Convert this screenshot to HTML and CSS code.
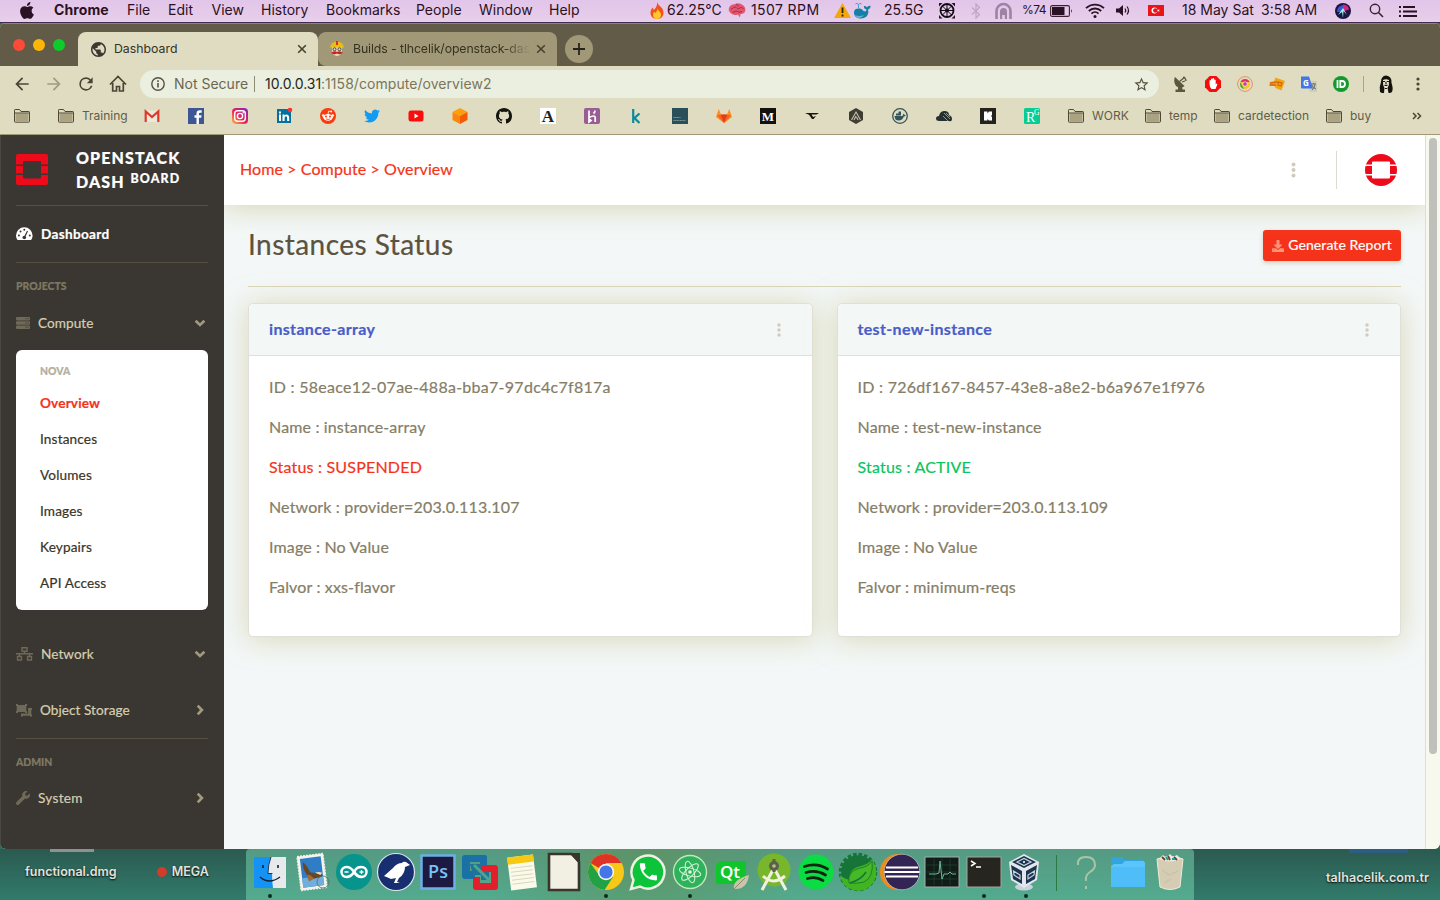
FILE: index.html
```html
<!DOCTYPE html>
<html lang="en">
<head>
<meta charset="utf-8">
<title>Dashboard</title>
<link rel="stylesheet" href="styles.css">
</head>
<body>
<svg class="defs" width="0" height="0">
  <symbol id="folder" viewBox="0 0 16 14"><path d="M.5 12.5V1.200q0-.7.7-.7h4.300l1.500 2h7.800q.7 0 .7.7v9.300q0 .7-.7.7H1.200q-.7 0-.7-.7z" fill="#dfdcc1" stroke="#4d4836"/><path d="M1.500 4.500h13v8h-13z" fill="#aaa281"/><path d="M1 4h14" stroke="#4d4836"/></symbol>
  <symbol id="dots" viewBox="0 0 4 16"><circle cx="2" cy="2.400" r="2"/><circle cx="2" cy="8" r="2"/><circle cx="2" cy="13.600" r="2"/></symbol>
  <symbol id="close" viewBox="0 0 10 10"><path d="M1.200 1.200l7.600 7.600M8.800 1.200L1.200 8.800" stroke="#46422f" stroke-width="1.600"/></symbol>
  <symbol id="down" viewBox="0 0 12 8"><path d="M1.600 1.700L6 5.900l4.400-4.200" fill="none" stroke="#a19a7c" stroke-width="2.700"/></symbol>
  <symbol id="right" viewBox="0 0 8 12"><path d="M1.700 1.600L5.900 6 1.700 10.400" fill="none" stroke="#a19a7c" stroke-width="2.700"/></symbol>
</svg>

<header class="menubar">
  <svg width="14" height="17" viewBox="2 0 20 24"><path d="M12.152 6.896c-.948 0-2.415-1.078-3.960-1.040-2.040.027-3.910 1.183-4.961 3.014-2.117 3.675-.546 9.103 1.519 12.090 1.013 1.454 2.208 3.090 3.792 3.039 1.520-.065 2.090-.987 3.935-.987 1.831 0 2.350.987 3.960.948 1.637-.026 2.676-1.480 3.676-2.948 1.156-1.688 1.636-3.325 1.662-3.415-.039-.013-3.182-1.221-3.220-4.857-.026-3.040 2.480-4.494 2.597-4.559-1.429-2.090-3.623-2.324-4.390-2.376-2-.156-3.675 1.090-4.610 1.090zM15.530 3.830c.843-1.012 1.400-2.427 1.245-3.830-1.207.052-2.662.805-3.532 1.818-.78.896-1.454 2.338-1.273 3.714 1.338.104 2.715-.688 3.559-1.701"/></svg>
  <b>Chrome</b><span>File</span><span>Edit</span><span>View</span><span>History</span><span>Bookmarks</span><span>People</span><span>Window</span><span>Help</span>
  <svg width="14" height="17" viewBox="0 0 14 17"><path d="M7 0c1 4 6.500 5 6.500 10.500C13.500 15 10.500 17 7 17S.5 15 .5 10.800C.5 8.500 1.500 7 2.500 5.500L4 8c1.500-2 3.500-4 3-8z" fill="#f4511e"/><path d="M7.500 6c0 3 3.500 3.500 3.500 7 0 2.500-2 4-4 4s-4-1.500-4-4c0-1.500.6-2.500 1.200-3.200L5.500 11C6.500 9.500 7.700 8 7.500 6z" fill="#ffca28"/></svg>
  <span class="stat">62.25°C</span>
  <svg width="18" height="15" viewBox="0 0 18 15"><path d="M1 8C0 4 3 1 6.500 1.200 9-.5 13 .3 14.500 2 17 3 18.500 7 16.500 9.500c-1 1.500-3 1.500-4 1.500l-.5 3.500-2-3C7 13 3 11.500 1 8z" fill="#e2566e"/><path d="M3 6c2 0 2-2 4-2s2 3 4 1.500S14 4 15.500 6M4.500 9c2 1 3-2 5-.5s3 0 4.500 0M8 1.500q2 0 2.500 2" fill="none" stroke="#a92a45"/></svg>
  <span class="stat rpm">1507 RPM</span>
  <svg width="17" height="15" viewBox="0 0 17 15"><path d="M8.500 0L17 15H0z" fill="#f5a70a"/><path d="M8.500 4.500v5.500M8.500 11.500v2" stroke="#332400" stroke-width="1.800"/></svg>
  <svg width="18" height="17" viewBox="0 0 18 17"><path d="M1 10c0-4 7-4.500 9-1.500 1.500 1.500 3.500 1 3.500-1-2-.5-3-2-2.500-3.500 1.500 0 2.500.5 3 1.500.5-1 2-2 3.500-1.500.3 2-1 3-2.500 3.500 1.500 5-2 9-7 9S1 14 1 10z" fill="#157fa8"/><path d="M2 13q4 2 9 0-2 3.500-5 3-3 0-4-3z" fill="#5cb4cd"/><path d="M5.500 6V2.500Q4 .5 2.500 2M5.500 2.500Q7 .5 8.500 2" fill="none" stroke="#36a8c9"/></svg>
  <span class="stat">25.5G</span>
  <svg width="16" height="17" viewBox="0 0 16 17"><circle cx="8" cy="8.500" r="6.500" fill="none" stroke="#120d12" stroke-width="1.800"/><circle cx="8" cy="8.500" r="2" fill="#120d12"/><path d="M8 2v13M1.500 8.500h13M3.400 4l9.200 9M12.600 4l-9.200 9" stroke="#120d12"/><path d="M0 1h3.500L0 4.500zM16 1v3.500L12.500 1zM0 16.500V13l3.500 3.500zM16 16.500h-3.500L16 13z"/></svg>
  <svg width="10" height="16" viewBox="0 0 10 16"><path d="M1 4.500l7.500 7L5 15V1l3.500 3.500-7.500 7" fill="none" stroke="#c0a5c4" stroke-width="1.200"/></svg>
  <svg width="17" height="16" viewBox="0 0 17 16"><path d="M1.500 16V8a7 7 0 0 1 14 0v8" fill="none" stroke="#9f83a4" stroke-width="2.600"/><path d="M5 16V8.500a3.500 3.500 0 0 1 7 0V16H9.800v-4H7.200v4z" fill="#9f83a4"/></svg>
  <span class="pct">%74</span>
  <svg width="23" height="12" viewBox="0 0 23 12"><rect x=".6" y=".6" width="18.800" height="10.800" rx="1.500" fill="none" stroke="#3c2032" stroke-width="1.100"/><path d="M2 2h12.500v8H2z" fill="#2c1024"/><path d="M21 4q1.800 2 0 4z" fill="#2c1024"/></svg>
  <svg width="20" height="15" viewBox="0 0 20 15"><path d="M1 5.200a13 13 0 0 1 18 0M3.800 8a9 9 0 0 1 12.400 0M6.500 10.600a5 5 0 0 1 7 0" fill="none" stroke="#2c1024" stroke-width="1.800"/><circle cx="10" cy="13.400" r="1.500" fill="#2c1024"/></svg>
  <svg width="14" height="13" viewBox="0 0 14 13"><path d="M0 4.500h3L7 1v11L3 8.500H0z" fill="#2c1024"/><path d="M9 4.500q1.500 2 0 4M11 2.500q3 4 0 8" fill="none" stroke="#2c1024" stroke-width="1.200"/></svg>
  <svg width="16" height="11" viewBox="0 0 16 11"><path d="M0 0h16v11H0z" fill="#ed1418"/><circle cx="6.500" cy="5.500" r="3" fill="#fff"/><circle cx="7.400" cy="5.500" r="2.300" fill="#ed1418"/><path d="M9 5.500l2.500-1.200-.5 1.200.5 1.200z" fill="#fff"/></svg>
  <span>18 May Sat</span><span>3:58 AM</span>
  <svg width="16" height="16" viewBox="0 0 16 16"><circle cx="8" cy="8" r="8" fill="#1b1445"/><path d="M8 1.500c4 0 6 3 6 5L8 8.500z" fill="#d4287d"/><path d="M2 9c0-4 2-6 6-7v7z" fill="#3e56c8"/><path d="M3 12l5-7 4 7-3.500-4-.5 7-1-6z" fill="#9ef0f0"/></svg>
  <svg width="15" height="15" viewBox="0 0 15 15"><circle cx="6" cy="6" r="4.700" fill="none" stroke="#3c2032" stroke-width="1.400"/><path d="M9.500 9.500L14 14" stroke="#3c2032" stroke-width="1.600"/></svg>
  <svg width="18" height="12" viewBox="0 0 18 12"><path d="M4 2h12M4 6.500h14M4 11h14M0 2h2M0 6.500h2M0 11h2" stroke="#2c1024" stroke-width="1.800"/></svg>
</header>

<main class="window">
  <div class="tabstrip">
    <div class="lights"><i class="r"></i><i class="y"></i><i class="g"></i></div>
    <div class="tab active">
      <svg width="15" height="15" viewBox="2 2 20 20"><path fill="#3b3830" d="M12 2C6.480 2 2 6.480 2 12s4.480 10 10 10 10-4.480 10-10S17.520 2 12 2zm-1 17.930c-3.950-.49-7-3.850-7-7.930 0-.62.08-1.210.21-1.790L9 15v1c0 1.100.9 2 2 2v1.930zm6.900-2.540c-.26-.81-1-1.390-1.900-1.390h-1v-3c0-.55-.45-1-1-1H8v-2h2c.55 0 1-.45 1-1V7h2c1.100 0 2-.9 2-2v-.41c2.930 1.190 5 4.060 5 7.410 0 2.080-.8 3.970-2.100 5.390z"/></svg>
      <span class="ttl">Dashboard</span><svg width="10" height="10"><use href="#close"/></svg>
    </div>
    <div class="tab idle">
      <svg width="14" height="16" viewBox="0 0 14 16"><path d="M2 6h10v5q-2 4-5 4t-5-4z" fill="#efd6b5"/><path d="M0 6.500Q1 1 7 .5q6 .5 7 6z" fill="#e8bd16"/><path d="M6 0h2v4H6z" fill="#d4341c"/><path d="M1 12q3-3 6-1 3-2 6 1-3 2-6 .5-3 1.500-6-.5z" fill="#cb2121"/><circle cx="4.500" cy="8.300" r="1.500" fill="none" stroke="#444"/><circle cx="9.500" cy="8.300" r="1.500" fill="none" stroke="#444"/></svg>
      <span class="ttl fade">Builds - tlhcelik/openstack-das</span><svg width="10" height="10"><use href="#close"/></svg>
    </div>
    <div class="plus"><svg width="12" height="12" viewBox="0 0 12 12"><path d="M6 0v12M0 6h12" stroke="#26231a" stroke-width="1.800"/></svg></div>
  </div>

  <div class="toolbar">
    <svg width="20" height="20" viewBox="0 0 24 24" fill="#4a4635"><path d="M20 11H7.830l5.590-5.590L12 4l-8 8 8 8 1.410-1.410L7.830 13H20v-2z"/></svg>
    <svg width="20" height="20" viewBox="0 0 24 24" fill="#a39b7c"><path d="M4 11h12.170l-5.590-5.590L12 4l8 8-8 8-1.410-1.410L16.170 13H4v-2z"/></svg>
    <svg width="20" height="20" viewBox="0 0 24 24" fill="#4a4635"><path d="M17.650 6.350A7.958 7.958 0 0 0 12 4a8 8 0 1 0 7.730 10h-2.080A6 6 0 1 1 12 6c1.660 0 3.140.69 4.220 1.780L13 11h7V4l-2.350 2.350z"/></svg>
    <svg width="20" height="20" viewBox="0 0 20 20"><path d="M4.700 9v8h3.800v-4.500h3V17h3.800V9M2 10.500l8-8 8 8" fill="none" stroke="#4a4635" stroke-width="1.700"/></svg>
    <div class="omnibox">
      <svg width="14" height="14" viewBox="0 0 14 14"><circle cx="7" cy="7" r="6.200" fill="none" stroke="#57523f" stroke-width="1.400"/><path d="M7 6v4.500M7 3.300v1.600" stroke="#57523f" stroke-width="1.600"/></svg>
      <span class="sec">Not Secure</span><i class="bar"></i><span class="url"><em>10.0.0.31</em>:1158/compute/overview2</span>
      <svg class="star" width="17" height="17" viewBox="0 0 24 24" fill="#57523f"><path d="M22 9.240l-7.190-.62L12 2 9.190 8.630 2 9.240l5.460 4.730L5.820 21 12 17.270 18.180 21l-1.630-7.030L22 9.240zM12 15.400l-3.760 2.270 1-4.280-3.320-2.880 4.380-.38L12 6.100l1.710 4.040 4.380.38-3.320 2.880 1 4.280L12 15.400z"/></svg>
    </div>
    <div class="exts">
      <svg viewBox="0 0 16 16"><path d="M2 1c-2 4 0 10 4 10.500 2 .5 4 0 5.500-1.500z" fill="#5c573f"/><path d="M6.500 5.500L12 1M10 1q3 1 3 4M9 6l3-1" stroke="#5c573f" fill="none" stroke-width="1.300"/><path d="M5 10h4l.5 3.500H12V16H2.500v-2.500H5z" fill="#5c573f"/></svg>
      <svg viewBox="0 0 16 16"><path d="M4.700 0h6.600L16 4.700v6.600L11.300 16H4.700L0 11.300V4.700z" fill="#f50d0d"/><path d="M4.500 8V4.500q.7-1 1.500 0V3q.8-1 1.600 0v-.5q.8-1 1.600 0V4q.8-1 1.500 0v4.500l1-1q1 0 .6.900L10.500 13h-4Q4.500 11 4.500 8z" fill="#fff"/></svg>
      <svg viewBox="0 0 16 16"><circle cx="8" cy="8" r="7.400" fill="none" stroke="#ea8d6f"/><circle cx="8" cy="8" r="5" fill="#f3c623"/><path d="M3.500 6A5 5 0 0 1 12.600 6H8z" fill="#e1306c"/><path d="M3.300 6.200L7 12.900A5 5 0 0 1 3.300 6.200z" fill="#34a853"/><circle cx="8" cy="8" r="2.200" fill="#c63d9c" stroke="#fff" stroke-width=".6"/></svg>
      <svg viewBox="0 0 16 16"><path d="M6.500 1.500L16 5l-3.500 9.500-6-2.500-1-2H0l1-4 4-.5z" fill="#f4a512"/><path d="M1 7l7-1M1 9h6M9 6l4 1-1 3-3-1z" stroke="#d26810" fill="none" stroke-width="1.300"/></svg>
      <svg viewBox="0 0 16 16"><path d="M6 5h10v11H9z" fill="#d0cdb7"/><path d="M0 .5h8l4 12H1q-1 0-1-1z" fill="#4277e8"/><path d="M10 8h5M12.500 7v1M11 14q3-2 3-6M11 9q1 3 4 4" stroke="#667068" fill="none"/><text x="2" y="9.500" font-size="8" font-weight="700" fill="#fff">G</text></svg>
      <svg viewBox="0 0 16 16"><circle cx="8" cy="8" r="8" fill="#129a2e"/><path d="M4.500 4v8M7.300 5h1.700a3 3 0 0 1 0 6H7.300z" stroke="#fff" stroke-width="1.800" fill="none"/></svg>
    </div>
    <i class="bar2"></i>
    <svg width="16" height="18" viewBox="0 0 16 18"><path d="M2 17Q1 12 3 7q0-6 5-6.500Q14 1 13.500 8q2 5 .5 9l-2 1H4z" fill="#16130c"/><path d="M5 5q3-1.500 6 0 .5 5-1.500 8l1 5H6l.5-5Q4.500 10 5 5z" fill="#e8e4cf"/><path d="M5 6.500h2.200M8.800 6.500H11M6.500 10.300h3M7 13.500h2M8 7v2" stroke="#16130c" stroke-width="1.200"/></svg>
    <svg width="4" height="14" viewBox="0 0 4 14" fill="#4a4635"><circle cx="2" cy="2" r="1.600"/><circle cx="2" cy="7" r="1.600"/><circle cx="2" cy="12" r="1.600"/></svg>
  </div>

  <nav class="bookmarks">
    <div><svg class="f"><use href="#folder"/></svg></div>
    <div><svg class="f"><use href="#folder"/></svg><span>Training</span></div>
    <div><svg viewBox="0 0 16 16"><path d="M1 2.500h14v11.500H1z" fill="#ebe8dc"/><path d="M1.700 14V3.500L8 9l6.300-5.500V14" fill="none" stroke="#dd3a2b" stroke-width="2.200"/></svg></div>
    <div><svg viewBox="0 0 16 16"><path d="M0 0h16v16H0z" fill="#3f5694"/><path d="M8.500 16V9.800h-2V7.300h2V5.500q0-3.200 3.200-3.200h2v2.400h-1.400q-1.400 0-1.400 1.300v1.300h2.700l-.4 2.500h-2.300V16z" fill="#fff"/></svg></div>
    <div><svg viewBox="0 0 16 16"><defs><linearGradient id="ig" x1="0" y1="1" x2="1" y2="0"><stop stop-color="#ffc13b"/><stop offset=".45" stop-color="#ee2253"/><stop offset="1" stop-color="#7d24c8"/></linearGradient></defs><rect width="16" height="16" rx="4" fill="url(#ig)"/><rect x="2.700" y="2.700" width="10.600" height="10.600" rx="3" fill="none" stroke="#fff" stroke-width="1.400"/><circle cx="8" cy="8" r="2.600" fill="none" stroke="#fff" stroke-width="1.400"/><circle cx="11.200" cy="4.800" r=".8" fill="#fff"/></svg></div>
    <div><svg viewBox="0 0 16 16"><path d="M1 1h14v14H1z" fill="#03719f"/><path d="M3 6.500h2V13H3zM3 3.500h2v2H3zM6.500 6.500h2v1q2-2 4 0 .7.8.7 2.300V13h-2.100V9.800q0-1.500-1.200-1.500T8.600 9.800V13H6.500z" fill="#fff"/><circle cx="14" cy="2" r="2.300" fill="#fb3030"/></svg></div>
    <div><svg viewBox="0 0 16 16"><circle cx="8" cy="8" r="8" fill="#fc3a0b"/><ellipse cx="8" cy="9.300" rx="4.800" ry="3.400" fill="#fff"/><circle cx="3.300" cy="7.500" r="1.300" fill="#fff"/><circle cx="12.700" cy="7.500" r="1.300" fill="#fff"/><circle cx="6" cy="8.500" r="1" fill="#fc3a0b"/><circle cx="10" cy="8.500" r="1" fill="#fc3a0b"/><path d="M5.800 10.800q2.200 1.400 4.400 0" stroke="#fc3a0b" fill="none" stroke-width=".8"/><path d="M8 6l.7-3 2.300.5" stroke="#fff" fill="none" stroke-width=".8"/><circle cx="11.200" cy="3.600" r="1" fill="#fff"/></svg></div>
    <div><svg viewBox="0 0 24 24"><path fill="#139bf2" d="M23.953 4.570a10 10 0 01-2.825.775 4.958 4.958 0 002.163-2.723c-.951.555-2.005.959-3.127 1.184a4.920 4.920 0 00-8.384 4.482C7.690 8.095 4.067 6.130 1.640 3.162a4.822 4.822 0 00-.666 2.475c0 1.710.87 3.213 2.188 4.096a4.904 4.904 0 01-2.228-.616v.06a4.923 4.923 0 003.946 4.827 4.996 4.996 0 01-2.212.085 4.936 4.936 0 004.604 3.417 9.867 9.867 0 01-6.102 2.105c-.39 0-.779-.023-1.170-.067a13.995 13.995 0 007.557 2.209c9.053 0 13.998-7.496 13.998-13.985 0-.21 0-.42-.015-.63A9.935 9.935 0 0024 4.590z"/></svg></div>
    <div><svg viewBox="0 0 16 16"><rect x=".5" y="2.500" width="15" height="11" rx="2.500" fill="#f90d0d"/><path d="M6.500 5.500v5L10.500 8z" fill="#fff"/></svg></div>
    <div><svg viewBox="0 0 16 16"><path d="M8 0l7.500 4L8 8 .5 4z" fill="#ff9d0a"/><path d="M.5 4L8 8v8l-7.500-4z" fill="#fb850d"/><path d="M15.500 4L8 8v8l7.500-4z" fill="#f25c05"/></svg></div>
    <div><svg viewBox="0 0 16 16"><path fill="#16140f" d="M8 0C3.580 0 0 3.580 0 8c0 3.540 2.290 6.530 5.470 7.590.4.07.55-.17.55-.38 0-.19-.01-.82-.01-1.490-2.010.37-2.530-.49-2.690-.94-.09-.23-.48-.94-.82-1.130-.28-.15-.68-.52-.01-.53.63-.01 1.080.58 1.230.82.72 1.210 1.870.87 2.330.66.07-.52.28-.87.51-1.070-1.780-.2-3.640-.89-3.640-3.950 0-.87.31-1.590.82-2.150-.08-.2-.36-1.020.08-2.120 0 0 .67-.21 2.200.82.64-.18 1.320-.27 2-.27s1.360.09 2 .27c1.530-1.040 2.200-.82 2.200-.82.44 1.100.16 1.920.08 2.120.51.56.82 1.270.82 2.150 0 3.070-1.870 3.750-3.650 3.950.29.25.54.73.54 1.480 0 1.070-.01 1.930-.01 2.200 0 .21.15.46.55.38A8.010 8.010 0 0016 8c0-4.420-3.580-8-8-8z"/></svg></div>
    <div><svg viewBox="0 0 16 16"><path d="M0 0h16v16H0z" fill="#fff"/><text class="serif" x="8" y="13.500" text-anchor="middle" font-size="17" fill="#24211a">A</text></svg></div>
    <div><svg viewBox="0 0 16 16"><rect width="16" height="16" rx="2" fill="#9a5c94"/><path d="M5 2.500v7q6-3 6.200 0V14M5 11v3l2-1.500zM11 2.500q0 1.800-1.500 3" stroke="#fff" stroke-width="1.700" fill="none"/></svg></div>
    <div><svg viewBox="0 0 16 16"><path d="M5.200 1v14M11.500 5.500L6.500 10l5 5" stroke="#0a8b9c" stroke-width="2.200" fill="none"/></svg></div>
    <div><svg viewBox="0 0 16 16"><path d="M0 0h16v16H0z" fill="#29505a"/><path d="M1.500 9.500h7M1.500 12.500h12" stroke="#8aa29c" stroke-width=".9" stroke-dasharray="1.200 .4"/></svg></div>
    <div><svg viewBox="0 0 16 16"><path d="M8 15L0 9l2.700-8L5 6.500h6L13.300 1 16 9z" fill="#fc8d22"/><path d="M8 15L1 7h4zM8 15l7-8h-4z" fill="#fa5d25"/><path d="M8 15L4.700 6.500h6.600z" fill="#e23b1f"/></svg></div>
    <div><svg viewBox="0 0 16 16"><path d="M0 0h16v16H0z" fill="#12110d"/><text class="serif" x="8" y="12.500" text-anchor="middle" font-size="13" fill="#fff">M</text></svg></div>
    <div><svg viewBox="0 0 16 16"><path d="M1 5h14l-2.500 1.500H7.500L9 9l3-1-2.500 3H8L5 6.800z" fill="#16140f"/></svg></div>
    <div><svg viewBox="0 0 16 16"><path d="M8 0l7 4v8l-7 4-7-4V4z" fill="#3f3d32"/><path d="M3.500 12L8 4l4.500 8M6 12l2-4M10 12l-1.500-3" stroke="#c8c4a8" fill="none" stroke-width="1.100"/></svg></div>
    <div><svg viewBox="0 0 16 16"><circle cx="8" cy="8" r="7.300" fill="none" stroke="#33545a" stroke-width="1.300"/><path d="M2.500 8h8q.3-1.500 1.300-2.500.7.500.7 1.500l1.300.2q-.7 1.300-2 1.300-1.300 4-5 4-4 0-4.300-4.500zM4 5.500h5v2H4zM6.500 3.500H9v2H6.500z" fill="#33545a"/></svg></div>
    <div><svg viewBox="0 0 16 16"><path d="M3.500 13Q0 13 0 10.500 0 8 3 8q1-5 5.500-5Q13 3 13 7q3 1 3 4t-3 2z" fill="#26302e"/><path d="M8 5l6 6M10 5l4 4M7 8l5 5" stroke="#dfdcc1" stroke-width=".6"/></svg></div>
    <div><svg viewBox="0 0 16 16"><path d="M0 0h16v16H0z" fill="#24221c"/><path d="M4 3.500h3.500v2L9 3.500h3V7l-1 1 1 1v3.500H9L7.500 11v1.500H4z" fill="#fff"/></svg></div>
    <div><svg viewBox="0 0 16 16"><rect width="16" height="16" rx="1.500" fill="#07cc94"/><text class="rg" x="2" y="14" font-size="14" fill="#fff">R</text><text class="rg" x="10" y="7" font-size="7.500" fill="#fff">G</text></svg></div>
    <div><svg class="f"><use href="#folder"/></svg><span>WORK</span></div>
    <div><svg class="f"><use href="#folder"/></svg><span>temp</span></div>
    <div><svg class="f"><use href="#folder"/></svg><span>cardetection</span></div>
    <div><svg class="f"><use href="#folder"/></svg><span>buy</span></div>
    <div><svg class="more" viewBox="0 0 10 8"><path d="M1 1l3 3-3 3M5.500 1l3 3-3 3" stroke="#4a4635" stroke-width="1.500" fill="none"/></svg></div>
  </nav>

  <div class="page">
    <aside class="sidebar">
      <div class="brand">
        <svg width="32" height="32" viewBox="0 0 32 32"><path d="M2 0h28q2 0 2 2v8.500h-7V8q0-1-1-1H8Q7 7 7 8v2.500H0V2q0-2 2-2zM0 12h7v7.500H0zM25 12h7v7.500h-7zM0 21h7v2.500q0 1 1 1h16q1 0 1-1V21h7v8q0 2-2 2H2q-2 0-2-2z" fill="#ed0b1b"/></svg>
        <div class="name">OPENSTACK<br>DASH <sup>BOARD</sup></div>
      </div>
      <hr>
      <a class="nav dash"><svg width="17" height="14" viewBox="0 0 17 14"><path d="M1.500 13Q0 11 0 8.500a8.300 8.300 0 0 1 16.600 0q0 2.500-1.500 4.500z" fill="#fff"/><g fill="#3a3631"><circle cx="2.900" cy="8.500" r="1"/><circle cx="4.500" cy="4.500" r="1"/><circle cx="8.300" cy="2.800" r="1"/><circle cx="13.800" cy="8.500" r="1"/><circle cx="8.300" cy="10.500" r="1.800"/></g><path d="M8.400 10.500L11.500 4" stroke="#3a3631" stroke-width="1.200"/></svg><b>Dashboard</b></a>
      <hr>
      <h6>PROJECTS</h6>
      <a class="nav compute"><svg width="14" height="12" viewBox="0 0 14 12"><g fill="#6f6a58"><rect width="14" height="3.500" rx="1"/><rect y="4.300" width="14" height="3.500" rx="1"/><rect y="8.500" width="14" height="3.500" rx="1"/></g><path d="M9.500 1.700h3M9.500 6h3M9.500 10.200h3" stroke="#3a3631" stroke-dasharray="1 1"/></svg><span>Compute</span><svg class="chev" width="12" height="8"><use href="#down"/></svg></a>
      <div class="sub">
        <h6>NOVA</h6>
        <a class="on">Overview</a><a>Instances</a><a>Volumes</a><a>Images</a><a>Keypairs</a><a>API Access</a>
      </div>
      <a class="nav network"><svg width="17" height="14" viewBox="0 0 17 14"><path d="M6 .8h5v3.400H6zM1.500 9.500h4v3.500h-4zM11.500 9.500h4v3.500h-4zM8.500 4.500V7M0 6.800h17M3.500 7v2.500M13.500 7v2.500" fill="none" stroke="#6f6a58" stroke-width="1.400"/></svg><span>Network</span><svg class="chev" width="12" height="8"><use href="#down"/></svg></a>
      <a class="nav storage"><svg width="16" height="13" viewBox="0 0 16 13"><path d="M0 0h2v1h7V0h2v2h-.7v5h.7v2H9V8H2v1H0V7h.7V2H0zM12 4h4v2h-.7v4.500h.7v2h-2v-.7H7v.7H5V9.500h7.300z" fill="#6f6a58"/></svg><span>Object Storage</span><svg class="chev" width="8" height="12"><use href="#right"/></svg></a>
      <hr>
      <h6>ADMIN</h6>
      <a class="nav system"><svg width="14" height="14" viewBox="0 0 512 512"><path fill="#6f6a58" d="M507.730 109.100c-2.240-9.030-13.540-12.090-20.120-5.510l-74.360 74.360-67.880-11.310-11.310-67.880 74.360-74.360c6.620-6.620 3.430-17.900-5.660-20.160-47.380-11.740-99.550.91-136.580 37.930-39.640 39.640-50.550 97.100-34.050 147.200L18.740 402.760c-24.990 24.990-24.990 65.510 0 90.500 24.990 24.990 65.510 24.990 90.500 0l213.210-213.210c50.120 16.710 107.470 5.680 147.370-34.220 37.070-37.070 49.700-89.320 37.910-136.730z"/></svg><span>System</span><svg class="chev" width="8" height="12"><use href="#right"/></svg></a>
    </aside>

    <section class="content">
      <div class="topbar">
        <span class="crumb">Home &gt; Compute &gt; Overview</span>
        <svg class="dots" width="5" height="16"><use href="#dots"/></svg>
        <i></i>
        <svg class="avatar" width="32" height="32" viewBox="0 0 32 32"><defs><clipPath id="round"><circle cx="16" cy="16" r="16"/></clipPath></defs><path clip-path="url(#round)" d="M0 0h32v10.500h-7V8.500q0-1-1-1H8q-1 0-1 1v2H0zM0 12h7v8H0zM25 12h7v8h-7zM0 21.500h7v2q0 1 1 1h16q1 0 1-1v-2h7V32H0z" fill="#ed0b1b"/></svg>
      </div>
      <div class="body">
        <div class="head"><h1>Instances Status</h1>
          <a class="btn"><svg width="12" height="12" viewBox="0 0 512 512"><path fill="#ff9279" d="M216 0h80c13.300 0 24 10.700 24 24v168h87.700c17.800 0 26.700 21.500 14.100 34.100L269.700 378.300c-7.500 7.500-19.800 7.500-27.300 0L90.100 226.100c-12.600-12.600-3.700-34.100 14.100-34.100H192V24c0-13.300 10.700-24 24-24zm296 376v112c0 13.300-10.700 24-24 24H24c-13.300 0-24-10.700-24-24V376c0-13.300 10.700-24 24-24h146.700l49 49c20.100 20.100 52.500 20.100 72.600 0l49-49H488c13.300 0 24 10.700 24 24z"/></svg><span>Generate Report</span></a>
        </div>
        <div class="cards">
          <article class="card">
            <header><h2>instance-array</h2><svg class="dots" width="4" height="14"><use href="#dots"/></svg></header>
            <div class="info"><p class="id">ID : 58eace12-07ae-488a-bba7-97dc4c7f817a</p><p>Name : instance-array</p><p class="bad">Status : SUSPENDED</p><p>Network : provider=203.0.113.107</p><p>Image : No Value</p><p>Falvor : xxs-flavor</p></div>
          </article>
          <article class="card">
            <header><h2>test-new-instance</h2><svg class="dots" width="4" height="14"><use href="#dots"/></svg></header>
            <div class="info"><p class="id">ID : 726df167-8457-43e8-a8e2-b6a967e1f976</p><p>Name : test-new-instance</p><p class="good">Status : ACTIVE</p><p>Network : provider=203.0.113.109</p><p>Image : No Value</p><p>Falvor : minimum-reqs</p></div>
          </article>
        </div>
      </div>
    </section>
    <div class="scroll"><i></i></div>
  </div>
</main>

<footer class="desktop">
  <div class="left"><span>functional.dmg</span><i></i><span>MEGA</span></div>
  <div class="dock">
    <div class="run"><svg viewBox="0 0 38 38"><path d="M3 4h32v31H3z" fill="#e6eaec"/><path d="M3 4h17q-3 8-3 16h4q0 8 1 15H3z" fill="#1592f5"/><path d="M9 24q9 8 20 0" stroke="#15212f" stroke-width="1.400" fill="none"/><path d="M12 12v3M27 12v3" stroke="#15212f" stroke-width="1.600"/><path d="M20 4q-3 8-3 16.500h4.500" stroke="#15212f" stroke-width=".8" fill="none"/></svg></div>
    <div><svg viewBox="0 0 38 38"><g transform="rotate(-7 19 19)"><path d="M6 2h26v34H6z" fill="#f5f3ea" stroke="#f5f3ea" stroke-width="1.500" stroke-dasharray="2 1"/><path d="M8.500 4.500h21v29h-21z" fill="#2f7cc7"/><path d="M8.500 24h21v9.500h-21z" fill="#71aedd"/><path d="M11 8q4 4 6 11l11 3q2 2-1 3l-8 1q-4 0-6-6-3-5-2-12z" fill="#6a4623"/><path d="M14 21q4 1 6 5l-5 2q-2-3-1-7z" fill="#9b6d37"/><path d="M22 20q4-1 7 1l-2 2z" fill="#eadcb7"/></g><circle cx="30" cy="29" r="6" fill="none" stroke="#4a7468" stroke-width=".8"/></svg></div>
    <div><svg viewBox="0 0 38 38"><circle cx="19" cy="19" r="18" fill="#06948c"/><path d="M19 19c-3-5-5.500-5-7.500-5a5 5 0 0 0 0 10c2 0 4.500 0 7.500-5zs4.500 5 7.500 5a5 5 0 0 0 0-10c-3 0-4.500 0-7.500 5z" fill="none" stroke="#fff" stroke-width="2.500"/><path d="M19 19c3 5 5.500 5 7.500 5" fill="none" stroke="#fff" stroke-width="2.500"/><path d="M9.500 19h4M24.500 19h4M26.500 17v4" stroke="#fff" stroke-width="1.300"/></svg></div>
    <div><svg viewBox="0 0 38 38"><circle cx="19" cy="19" r="18.500" fill="#172f70" stroke="#dfe5ea" stroke-width="1.200"/><path d="M7 23l9-8q4-5 9-5 1-2 4-1l4 3-5 2q0 7-6 11l-2 4 3 1h-6l2-5-5 1q-2-1-7-3z" fill="#fff"/></svg></div>
    <div><svg viewBox="0 0 38 38"><path d="M2.500 2.500h33v33h-33z" fill="#1d1a42" stroke="#6dafe4" stroke-width="2.500"/><text class="ps" x="19" y="25" text-anchor="middle" font-size="18" fill="#78c3f5">Ps</text></svg></div>
    <div><svg viewBox="0 0 38 38"><path d="M4 2h20q2 0 2 2v8h-7V9H9v9h5v8H4q-3 0-3-3V5q0-3 3-3z" fill="#1971a6"/><path d="M14 12h20q3 0 3 3v19q0 3-3 3H15q-3 0-3-3V24h7v6h11V19H14z" fill="#e21f2a"/><path d="M9 11h11v8h8v8h-8v-5h-8z" fill="#1f7397"/><path d="M13 12l15 15" stroke="#4fa38f" stroke-width="3"/></svg></div>
    <div><svg viewBox="0 0 38 38"><g transform="rotate(-7 19 19)"><path d="M6 3h26v33H6z" fill="#fbfae9"/><path d="M6 3h26v7H6z" fill="#f7c913"/><path d="M8 14h22M8 18h22M8 22h22M8 26h22M8 30h22" stroke="#d7d5c2"/></g></svg></div>
    <div><svg viewBox="0 0 38 38"><path d="M4 1h23l7 8v28H4z" fill="#f1f0e2" stroke="#38352c" stroke-width="2.600"/><path d="M24 0h11v11z" fill="#38352c"/></svg></div>
    <div class="run"><svg viewBox="0 0 38 38"><circle cx="19" cy="19" r="18" fill="#f7c817"/><path d="M19 19L3.400 10A18 18 0 0 1 34.600 10H19z" fill="#df3325"/><path d="M3.400 10A18 18 0 0 0 17.500 37L26 24 12 22z" fill="#21a245"/><circle cx="19" cy="19" r="8.200" fill="#f5f5ee"/><circle cx="19" cy="19" r="6.600" fill="#4476e8"/></svg></div>
    <div><svg viewBox="0 0 38 38"><path d="M2 36l2.500-9A16.500 16.500 0 1 1 11 33.500z" fill="#0cc33a" stroke="#edf0e2" stroke-width="2.500"/><path transform="translate(8 7.500) scale(.95)" fill="#fff" d="M6.620 10.790c1.440 2.830 3.760 5.140 6.590 6.590l2.200-2.200c.27-.27.67-.36 1.020-.24 1.120.37 2.330.57 3.570.57.55 0 1 .45 1 1V20c0 .55-.45 1-1 1-9.390 0-17-7.610-17-17 0-.55.45-1 1-1h3.500c.55 0 1 .45 1 1 0 1.250.2 2.450.57 3.570.11.35.03.74-.25 1.020l-2.200 2.200z"/></svg></div>
    <div class="run"><svg viewBox="0 0 38 38"><circle cx="19" cy="19" r="16.500" fill="#2eb35c" stroke="#bfe8bb" stroke-width="1.400"/><g fill="none" stroke="#d8f5d9" stroke-width="1"><ellipse cx="19" cy="19" rx="11" ry="4" transform="rotate(15 19 19)"/><ellipse cx="19" cy="19" rx="11" ry="4" transform="rotate(75 19 19)"/><ellipse cx="19" cy="19" rx="11" ry="4" transform="rotate(135 19 19)"/></g><circle cx="19" cy="19" r="1.800" fill="#e9f9e8"/></svg></div>
    <div><svg viewBox="0 0 38 38"><path d="M7 8h26v23H3V12z" fill="#10c52b"/><text class="qt" x="17" y="25" text-anchor="middle" font-size="17" font-weight="600" fill="#fff">Qt</text><path d="M21 36q-2-9 15-14-2 15-15 14z" fill="#c9c5a9"/><path d="M20 37l12-12" stroke="#8e8b70"/></svg></div>
    <div><svg viewBox="0 0 38 38"><circle cx="19" cy="17" r="16.500" fill="#78b72c"/><path d="M19 15L7 37M19 15l12 22M8 23q10 10 22 0" stroke="#f2f0df" stroke-width="3" fill="none"/><circle cx="19" cy="13" r="5" fill="#5e604a"/><path d="M19 6v13" stroke="#5e604a" stroke-width="3"/><circle cx="19" cy="13" r="1.800" fill="#b5c58f"/></svg></div>
    <div><svg viewBox="0 0 38 38"><circle cx="19" cy="19" r="17.500" fill="#0bdc44"/><path d="M7.500 13.500q12.500-4 23 2.500M9 19.500q10.500-3 19.500 2.500M10.500 25.500q8.500-2.500 15.500 2" stroke="#10240f" stroke-width="2.700" fill="none" stroke-linecap="round"/></svg></div>
    <div><svg viewBox="0 0 38 38"><circle cx="19" cy="19" r="17.500" fill="none" stroke="#167438" stroke-width="3.500" stroke-dasharray="3.500 2"/><circle cx="19" cy="19" r="16.800" fill="#167438"/><path d="M33 6q8 13 1 24-7 10-20 7Q3 34 1 22q4 4 9 5 0-12 12-14 8-2 11-7z" fill="#40b421"/><path d="M10 30q-2-12 11-15 8-1 12-7 2 16-8 21-8 2-15 1z" fill="#45b927" stroke="#177229" stroke-width=".8"/><path d="M11 30q11-3 16-11" fill="none" stroke="#167438" stroke-width="1.500"/></svg></div>
    <div><svg viewBox="0 0 38 38"><circle cx="17" cy="19" r="18" fill="#f08b1a"/><circle cx="21" cy="19" r="17.800" fill="#332553" stroke="#d7d1d8" stroke-width=".6"/><path d="M5 14.500h32M3.500 19h35M5 23.500h32" stroke="#fff" stroke-width="2"/></svg></div>
    <div><svg viewBox="0 0 38 38"><rect x="2" y="4" width="34" height="30" fill="#111c19" stroke="#a5ada5"/><path d="M4 12h30M4 19h30M4 26h30M11 6v26M19 6v26M27 6v26" stroke="#1d4933" stroke-width=".7"/><path d="M6 21h7l3-1 1-12 2 18 2-5h4l2-2 2 2h4" stroke="#6cb799" fill="none"/></svg></div>
    <div class="run"><svg viewBox="0 0 38 38"><rect x="2" y="4" width="34" height="30" fill="#272520" stroke="#a5a59b"/><path d="M6 8l4 2.500L6 13M11 14h5" stroke="#fff" fill="none" stroke-width="1.500"/></svg></div>
    <div class="run"><svg viewBox="2 0 38 38"><ellipse cx="19" cy="34" rx="9" ry="3.500" fill="#c9d3dc"/><path d="M19 1l15 8-2 18-13 8L6 27 4 9z" fill="#e1e7ec"/><path d="M19 3l12 6-12 6L7 9zM6 12l11 6v13L8 26zM32 12l-11 6v13l9-5z" fill="#1c3450"/><path d="M12 9l7-3.500L26 9l-7 3.500zM8.500 18l6.500 4v4l-6-4zM29.500 18L23 22v4l6-4z" fill="none" stroke="#c6d3dd" stroke-width="1.200"/><path d="M19 8v2" stroke="#c6d3dd" stroke-width="2"/></svg></div>
    <i></i>
    <div><svg viewBox="0 0 38 38"><path d="M11 12q-1-8 8-8t9 8q0 4-5 7t-4 9M19 33v3" fill="none" stroke="#a9c5a5" stroke-width="2"/></svg></div>
    <div><svg viewBox="0 0 38 38"><path d="M2 8q0-4 4-4h7l3 3h16q3 0 3 4H2z" fill="#32a5df"/><path d="M2 13l3-2h8l3-3h18q2 0 2 3v23H2z" fill="#5bc5fb"/><path d="M2 14h34v20H2z" fill="#4ebdf8"/></svg></div>
    <div><svg viewBox="0 0 38 38"><path d="M6 6q13-5 26 0l-3 28q-10 5-20 0z" fill="#d5cdb3" stroke="#eeead8"/><path d="M8 6l4-4 3 3 4-4 3 3 4-2 4 4q-11 5-22 0z" fill="#eeeadb"/><path d="M11 4l3 3M17 3l2 4M23 4l3 3" stroke="#6b3f32" stroke-width="1.800"/><path d="M15 4l2 3M21 6h3" stroke="#239cae" stroke-width="2"/><path d="M11 17l7 5 9-4M13 30l7-4" stroke="#c8bfa3" fill="none"/></svg></div>
  </div>
  <div class="rightlabel">talhacelik.com.tr</div>
</footer>
</body>
</html>
```
FILE: styles.css
```css
* { box-sizing: border-box; }
body { margin: 0; width: 1440px; height: 900px; overflow: hidden; display: grid; grid-template-rows: 23px 826px 51px; font-family: Inter, sans-serif; background: #2d6c60; }
.defs { position: absolute; }
svg { display: block; flex: none; overflow: visible; }
text { font-family: "Open Sans", sans-serif; }
text.serif { font-family: "Liberation Serif", serif; font-weight: 700; }
text.rg { font-family: "Liberation Serif", serif; }

.menubar { padding: 0 0 1px 20px; display: grid; align-items: center; white-space: nowrap; font-size: 14px; line-height: 16px; color: #2c1024; fill: #2c1024; background: linear-gradient(#e2c5ea, #e7cfe9); border-bottom: 1px solid #42294f;
  grid-template-columns: 34px 73px 41px 43.500px 49.500px 65px 90px 63px 70px 101px 17px 61px 23px 83px 19px 31px 55px 32px 24px 27px 28px 35px 31px 32px 34px 79px 74px 34px 30px 20px; }
.menubar span, .menubar b { padding-bottom: 1px; }
.menubar b { letter-spacing: .1px; }
.menubar .rpm { letter-spacing: .4px; }
.menubar .pct { font-size: 12px; letter-spacing: -.6px; }

.window { display: grid; grid-template-rows: 43px 36px 33px 714px; background: #dfdcc1; border-radius: 5px 5px 6px 6px; overflow: hidden; }
.tabstrip { background: #625b47; display: flex; align-items: flex-end; border-top: 1px solid #8b8574; }
.lights { width: 78px; height: 34px; padding: 7px 0 0 13px; display: flex; gap: 8px; }
.lights i { width: 12px; height: 12px; border-radius: 50%; }
.lights .r { background: #fc4a38; }
.lights .y { background: #fdb606; }
.lights .g { background: #0fca2b; }
.tab { height: 34px; display: flex; align-items: center; border-radius: 8px 8px 0 0; padding: 0 11px 0 13px; font-size: 12.300px; color: #35321f; }
.tab.active { width: 240px; background: #dfdcc1; }
.tab.idle { width: 239px; padding-left: 12px; background: #a19877; border-radius: 8px 8px 0 8px; }
.tab .ttl { flex: 1; margin-left: 8px; padding-bottom: 2px; white-space: nowrap; }
.idle .ttl { margin: 0 6px 0 9px; letter-spacing: -.1px; }
.idle .fade { -webkit-mask-image: linear-gradient(90deg, #000 85%, transparent); mask-image: linear-gradient(90deg, #000 85%, transparent); }
.plus { width: 28px; height: 28px; margin: 0 0 3px 8px; border-radius: 50%; background: #a19877; display: grid; place-items: center; }

.toolbar { display: flex; align-items: center; padding-left: 12px; gap: 12px; }
.omnibox { width: 1019px; height: 28px; border-radius: 14px; background: #ebefdf; display: flex; align-items: center; padding: 0 9px 0 11px; font-size: 14px; color: #6c6754; }
.sec { margin-left: 9px; width: 80px; padding-bottom: 1px; white-space: nowrap; }
.bar { width: 1px; height: 16px; background: #8f8a74; margin-right: 10px; }
.url { flex: 1; padding-bottom: 1px; color: #7b755b; letter-spacing: .05px; }
.url em { font-style: normal; color: #26231a; letter-spacing: -.05px; }
.exts { display: flex; gap: 16px; margin-left: 2px; }
.exts svg { width: 16px; height: 16px; }
.bar2 { width: 1px; height: 16px; background: #a9a388; margin: 0 2px; }
.toolbar > svg:last-child { margin-left: 10px; }

.bookmarks { padding: 0 0 4px 14px; border-bottom: 1px solid #a19877; display: grid; align-items: center; font-size: 12px; color: #625d48;
  grid-template-columns: 44px 86px repeat(21, 44px) 77px 69px 112px 86px 20px; }
.bookmarks div { display: flex; align-items: center; gap: 8px; white-space: nowrap; }
.bookmarks span { padding-bottom: 2px; }
.bookmarks svg { width: 16px; height: 16px; }
.bookmarks svg.f { height: 14px; }
.bookmarks svg.more { width: 10px; height: 8px; }

.page { display: grid; grid-template-columns: 224px 1201px 15px; font-family: Lato, sans-serif; overflow: hidden; -webkit-text-stroke: .2px currentColor; }
.sidebar { background: #3a3631; padding: 0 16px 0 15px; color: #d5cfb0; font-size: 13.600px; border-left: 1px solid #4b4842; }
.sidebar hr { border: 0; height: 1px; margin: 0; background: #55503f; }
.brand { height: 70px; display: flex; align-items: center; padding-bottom: 1px; }
.name { margin-left: 28px; font-size: 16px; font-weight: 900; line-height: 24px; letter-spacing: 1.100px; color: #fff; white-space: nowrap; }
.name sup { font-size: 12.400px; line-height: 0; vertical-align: 5px; margin-left: 1px; }
.nav { height: 56px; display: flex; align-items: center; gap: 8px; letter-spacing: .05px; }
.dash { color: #fff; }
.dash b { letter-spacing: .3px; }
.chev { margin-left: auto; margin-right: 2px; }
.system .chev, .storage .chev { margin-right: 4px; }
.sidebar h6 { margin: 0; font-size: 10.400px; font-weight: 900; color: #7f7962; line-height: 12px; padding-top: 17px; }
.compute { height: 58px; padding-top: 3px; }
.system { padding-top: 0; height: 60px; }
.system span { letter-spacing: .3px; }
.sub { height: 260px; background: #fff; border-radius: 6px; padding: 15px 24px; color: #3a3427; margin-bottom: 16px; }
.sub h6 { padding: 0; margin-bottom: 8px; color: #b5b09e; }
.sub a { display: block; height: 36px; line-height: 36px; letter-spacing: .15px; }
.sub .on { color: #f5331b; font-weight: 700; }

.content { background: #f3f7f7; overflow: hidden; }
.topbar { position: relative; height: 70px; background: #fff; display: flex; align-items: center; padding: 0 28px 0 16px; box-shadow: 0 2px 28px rgba(195, 190, 130, .6); }
.crumb { flex: 1; padding-bottom: 3px; font-size: 16px; color: #f5331b; letter-spacing: .1px; }
.topbar i { width: 1px; height: 38px; background: #dcdbd2; margin: 0 28px 0 40px; }
.dots { fill: #cfccbd; }
.body { padding: 24px 24px 0; }
.head { height: 58px; display: flex; justify-content: space-between; align-items: flex-start; border-bottom: 1px solid #dad7b8; margin-bottom: 16px; }
h1 { margin: -2px 0 0; font-size: 28px; line-height: 34px; font-weight: 400; color: #5a5340; letter-spacing: .45px; }
.btn { width: 138px; height: 31px; margin-top: 1px; border-radius: 3px; background: #f5331b; color: #fff; font-size: 14px; display: flex; align-items: center; justify-content: center; gap: 4px; white-space: nowrap; box-shadow: 0 2px 4px rgba(130, 120, 60, .3); }
.btn span { padding-bottom: 2px; letter-spacing: .1px; }
.cards { display: grid; grid-template-columns: 1fr 1fr; gap: 24px; }
.card { height: 334px; border: 1px solid #e0e0d8; border-radius: 5px; background: #fff; box-shadow: 0 2px 28px rgba(195, 190, 130, .55); }
.card header { height: 52px; display: flex; align-items: center; justify-content: space-between; padding: 0 31px 0 20px; border-bottom: 1px solid #e0e0d8; background: #f3f7f6; border-radius: 5px 5px 0 0; }
.card h2 { margin: 0; padding-bottom: 3px; font-size: 16px; color: #4a5cc9; letter-spacing: .33px; }
.info { padding: 19px 20px; }
.info p { margin: 0 0 16px; font-size: 16px; line-height: 24px; color: #857d66; letter-spacing: .15px; }
.info .id { letter-spacing: .27px; }
.info .bad { color: #f5331b; letter-spacing: .2px; }
.info .good { color: #08c560; letter-spacing: .2px; }
.scroll { background: #f7f8ee; border-left: 1px solid #dfdfc8; padding: 3px; }
.scroll i { display: block; width: 8px; height: 616px; border-radius: 4px; background: #bfc0b9; }

.desktop { display: grid; grid-template-columns: 246px 948px 246px; color: #e2e2de; font-size: 12.500px; font-weight: 600;
  background: linear-gradient(#8b9292, #8b9292) 50px 0 / 44px 3px no-repeat, linear-gradient(#2b5e80, #2b5e80) 1349px 0 / 59px 4px no-repeat, linear-gradient(#2b5a50, #317b6b); }
.left { display: flex; padding: 15px 0 0 25px; text-shadow: 0 1px 2px #000; }
.left i { width: 10px; height: 10px; border-radius: 50%; background: #d33b2a; margin: 3px 5px 0 40px; }
.rightlabel { padding-top: 21px; text-align: right; padding-right: 11px; letter-spacing: .08px; text-shadow: 0 1px 2px #000; }
.dock { display: grid; grid-template-columns: repeat(19, 42px) 18px repeat(3, 42px); padding: 4px 0 0 3px; background: radial-gradient(circle at 42% 0, rgba(100, 140, 80, .55), transparent 160px), linear-gradient(#559a83, #53ab8e); border-radius: 4px 4px 0 0; }
.dock div { padding-left: 2px; height: 44px; }
.dock svg { width: 38px; height: 38px; }
.dock .run::after { content: ""; display: block; width: 4px; height: 4px; border-radius: 50%; background: #102a18; margin: 3px 0 0 17px; }
.dock > i { width: 1px; height: 36px; margin: 2px 0 0 9px; background: #2b7a42; }
```
